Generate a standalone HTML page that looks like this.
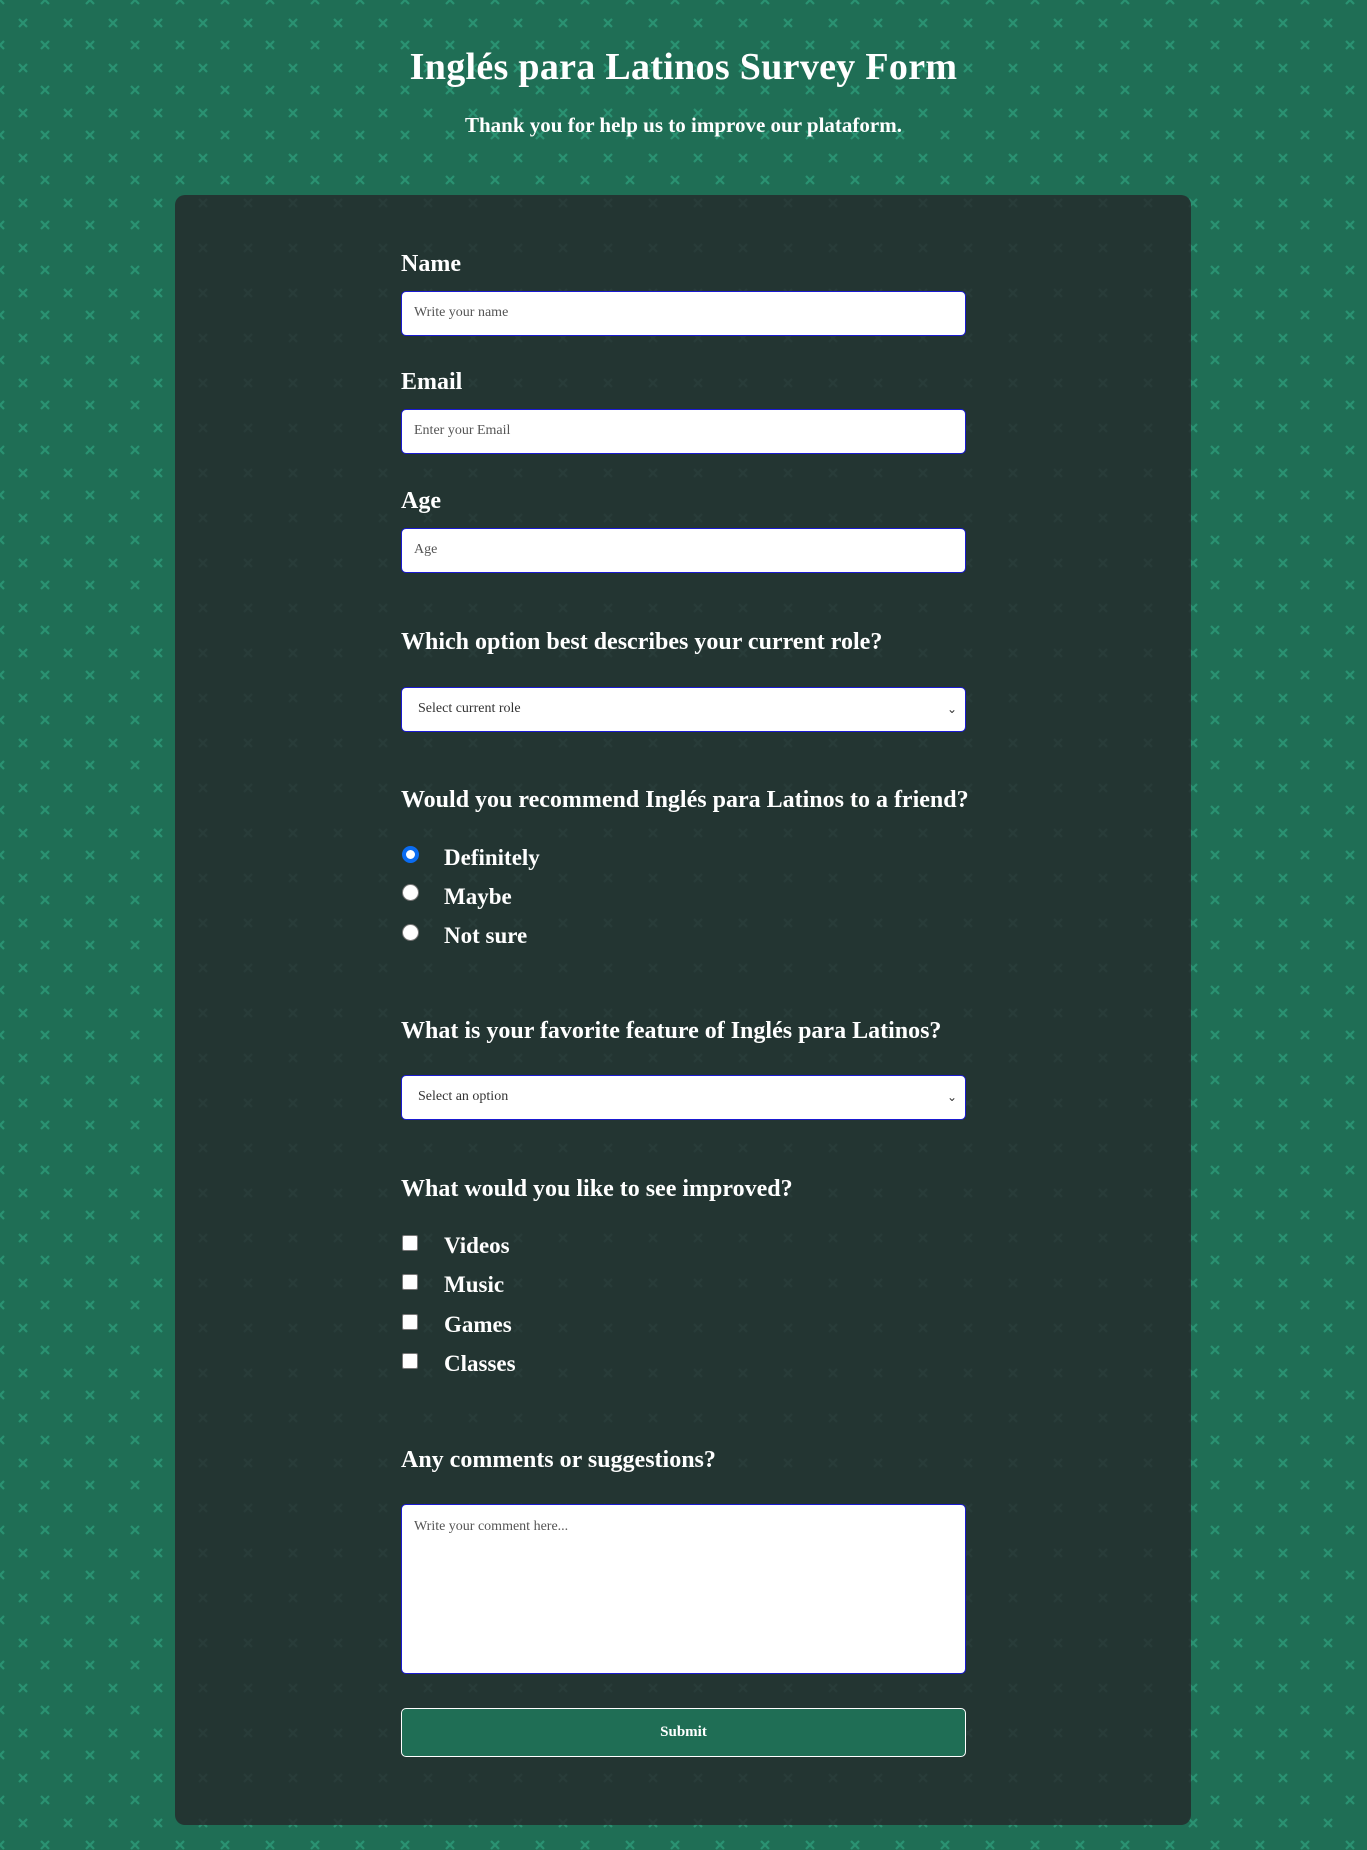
<!DOCTYPE html>
<html><head><meta charset="utf-8">
<style>
*{box-sizing:border-box;margin:0;padding:0}
html,body{width:1367px;height:1850px;overflow:hidden}
body{font-family:"Liberation Serif",serif;color:#fff;position:relative;background-color:#1f6e55}
svg.bg{position:absolute;left:0;top:0}
h1{position:absolute;left:0;width:1367px;top:45px;text-align:center;font-size:38px;font-weight:bold;letter-spacing:0.3px}
.sub{position:absolute;left:0;width:1367px;top:113px;text-align:center;font-size:21px;font-weight:bold}
.card{position:absolute;left:175px;top:195px;width:1016px;height:1630px;border-radius:10px;overflow:hidden;background:#233532}
.lab{position:absolute;left:401px;font-size:24px;font-weight:bold}
.inp{position:absolute;left:401px;width:565px;height:45px;background:#fff;border:1.5px solid #1a1ad0;border-radius:5px;color:#555;font-size:14px;padding-left:12px;line-height:42px}
.sel{color:#333;padding-left:16px}
.chev{position:absolute;right:8px;top:0;font-size:12px;color:#333}
.opt{position:absolute;left:444px;font-size:23px;font-weight:bold}
.rad{position:absolute;left:402px;width:17px;height:17px;border-radius:50%;background:#fff;border:1px solid #777}
.rad.on{border:4px solid #0a6cf2}
.cb{position:absolute;left:402px;width:16px;height:16px;background:#fff;border-radius:2px;border:1px solid #777}
.btn{position:absolute;left:401px;top:1708px;width:565px;height:49px;background:#1f6e55;border:1px solid #fff;border-radius:5px;text-align:center;line-height:47px;font-size:15px;font-weight:bold}
</style></head><body>
<svg class="bg" width="1367" height="1850"><defs>
<pattern id="p" width="45" height="45" patternUnits="userSpaceOnUse"><g stroke="#2a9272" stroke-width="2.2"><path d="M19 19l8 8M27 19l-8 8M-4 -4l8 8M4 -4l-8 8M41 -4l8 8M49 -4l-8 8M-4 41l8 8M4 41l-8 8M41 41l8 8M49 41l-8 8"/></g></pattern>
<pattern id="q" width="45" height="45" patternUnits="userSpaceOnUse"><g stroke="#283c39" stroke-width="2"><path d="M19 19l8 8M27 19l-8 8"/></g></pattern>
</defs><rect width="1367" height="1850" fill="url(#p)"/>
<rect x="175" y="195" width="1016" height="1630" rx="10" fill="#233532"/>
<rect x="175" y="195" width="1016" height="1630" rx="10" fill="url(#q)"/></svg>
<h1>Inglés para Latinos Survey Form</h1>
<div class="sub">Thank you for help us to improve our plataform.</div>
<div class="lab" style="top:251px">Name</div>
<div class="inp" style="top:291px">Write your name</div>
<div class="lab" style="top:369px">Email</div>
<div class="inp" style="top:409px">Enter your Email</div>
<div class="lab" style="top:488px">Age</div>
<div class="inp" style="top:528px">Age</div>
<div class="lab" style="top:629px">Which option best describes your current role?</div>
<div class="inp sel" style="top:687px">Select current role<span class="chev">&#8964;</span></div>
<div class="lab" style="top:787px">Would you recommend Inglés para Latinos to a friend?</div>
<div class="rad on" style="top:846px"></div><div class="opt" style="top:845px">Definitely</div>
<div class="rad" style="top:884px"></div><div class="opt" style="top:884px">Maybe</div>
<div class="rad" style="top:924px"></div><div class="opt" style="top:923px">Not sure</div>
<div class="lab" style="top:1018px">What is your favorite feature of Inglés para Latinos?</div>
<div class="inp sel" style="top:1075px">Select an option<span class="chev">&#8964;</span></div>
<div class="lab" style="top:1176px">What would you like to see improved?</div>
<div class="cb" style="top:1235px"></div><div class="opt" style="top:1233px">Videos</div>
<div class="cb" style="top:1274px"></div><div class="opt" style="top:1272px">Music</div>
<div class="cb" style="top:1314px"></div><div class="opt" style="top:1312px">Games</div>
<div class="cb" style="top:1353px"></div><div class="opt" style="top:1351px">Classes</div>
<div class="lab" style="top:1447px">Any comments or suggestions?</div>
<div class="inp" style="top:1504px;height:170px;line-height:20px;padding-top:12px">Write your comment here...</div>
<div class="btn">Submit</div>
</body></html>
